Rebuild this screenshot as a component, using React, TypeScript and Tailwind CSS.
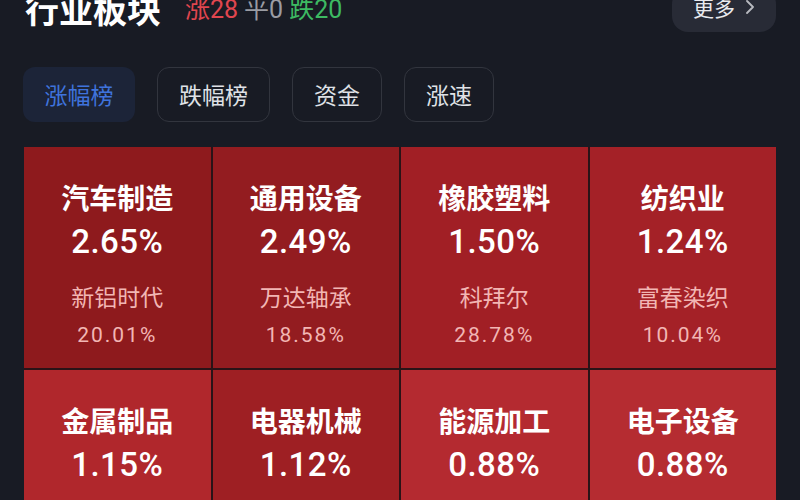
import React from 'react';

const font = { fontFamily: '"Noto Sans CJK SC", "Noto Sans", sans-serif' };
const numFont = { fontFamily: 'Roboto, "Noto Sans CJK SC", sans-serif' };

type Tile = { name: string; pct: string; stock?: string; stockPct?: string; bg: string };

const tiles: Tile[] = [
  { name: '汽车制造', pct: '2.65%', stock: '新铝时代', stockPct: '20.01%', bg: 'bg-[#8e1a1d]' },
  { name: '通用设备', pct: '2.49%', stock: '万达轴承', stockPct: '18.58%', bg: 'bg-[#931c20]' },
  { name: '橡胶塑料', pct: '1.50%', stock: '科拜尔', stockPct: '28.78%', bg: 'bg-[#a11f25]' },
  { name: '纺织业', pct: '1.24%', stock: '富春染织', stockPct: '10.04%', bg: 'bg-[#a42127]' },
  { name: '金属制品', pct: '1.15%', bg: 'bg-[#b0272c]' },
  { name: '电器机械', pct: '1.12%', bg: 'bg-[#9e1f23]' },
  { name: '能源加工', pct: '0.88%', bg: 'bg-[#b42a30]' },
  { name: '电子设备', pct: '0.88%', bg: 'bg-[#b52c31]' },
];

const tabs = ['涨幅榜', '跌幅榜', '资金', '涨速'];

export default function App() {
  return (
    <div className="w-[800px] h-[500px] overflow-hidden bg-[#181b24] text-white" style={font}>
      <div className="-mt-[16px] h-[48px] flex items-center pl-[25px] pr-[24px]">
        <span className="text-[34px] font-bold leading-none mt-[2px]">行业板块</span>
        <span className="ml-[24px] text-[25px] leading-none mt-[2px] flex gap-[6px]" style={numFont}>
          <span className="text-[#e0464f]">涨28</span>
          <span className="text-[#9a9ca3]">平0</span>
          <span className="text-[#3dba62]">跌20</span>
        </span>
        <div className="ml-auto h-[44px] w-[104px] mt-[4px] rounded-2xl bg-[#282b36] flex items-center justify-center gap-[10px]">
          <span className="text-[21px] leading-none text-[#e9eaee] mt-[-6px]">更多</span>
          <svg width="10" height="16" viewBox="0 0 10 16" className="mt-[-6px]">
            <path d="M2 2 L8 8 L2 14" fill="none" stroke="#b8bac0" strokeWidth="1.8" strokeLinecap="round" strokeLinejoin="round" />
          </svg>
        </div>
      </div>

      <div className="mt-[35px] pl-[23px] flex gap-[22px]">
        {tabs.map((t, i) => (
          <div
            key={t}
            className={
              i === 0
                ? 'h-[55px] w-[112px] rounded-xl bg-[#1c2438] flex items-center justify-center text-[23px] text-[#3f73dc]'
                : 'h-[55px] px-[21px] rounded-xl border border-[#32353e] flex items-center justify-center text-[23px] text-[#dfe1e6]'
            }
          >
            {t}
          </div>
        ))}
      </div>

      <div className="mt-[25px] ml-[24px] w-[752px] grid grid-cols-4 gap-[2px] bg-[#2a1317]">
        {tiles.map((t) => (
          <div key={t.name} className={`${t.bg} h-[221px] flex flex-col items-center pt-[34px]`}>
            <div className="text-[28px] font-semibold leading-[32px]">{t.name}</div>
            <div className="text-[33px] font-medium leading-[40px] mt-[9px] tracking-[0.5px]" style={numFont}>
              {t.pct}
            </div>
            {t.stock && (
              <>
                <div className="text-[23px] leading-[30px] mt-[19px] text-[#f2b6b4]">{t.stock}</div>
                <div className="text-[21px] leading-[26px] mt-[11px] text-[#f2b6b4] tracking-[2px]" style={numFont}>
                  {t.stockPct}
                </div>
              </>
            )}
          </div>
        ))}
      </div>
    </div>
  );
}
